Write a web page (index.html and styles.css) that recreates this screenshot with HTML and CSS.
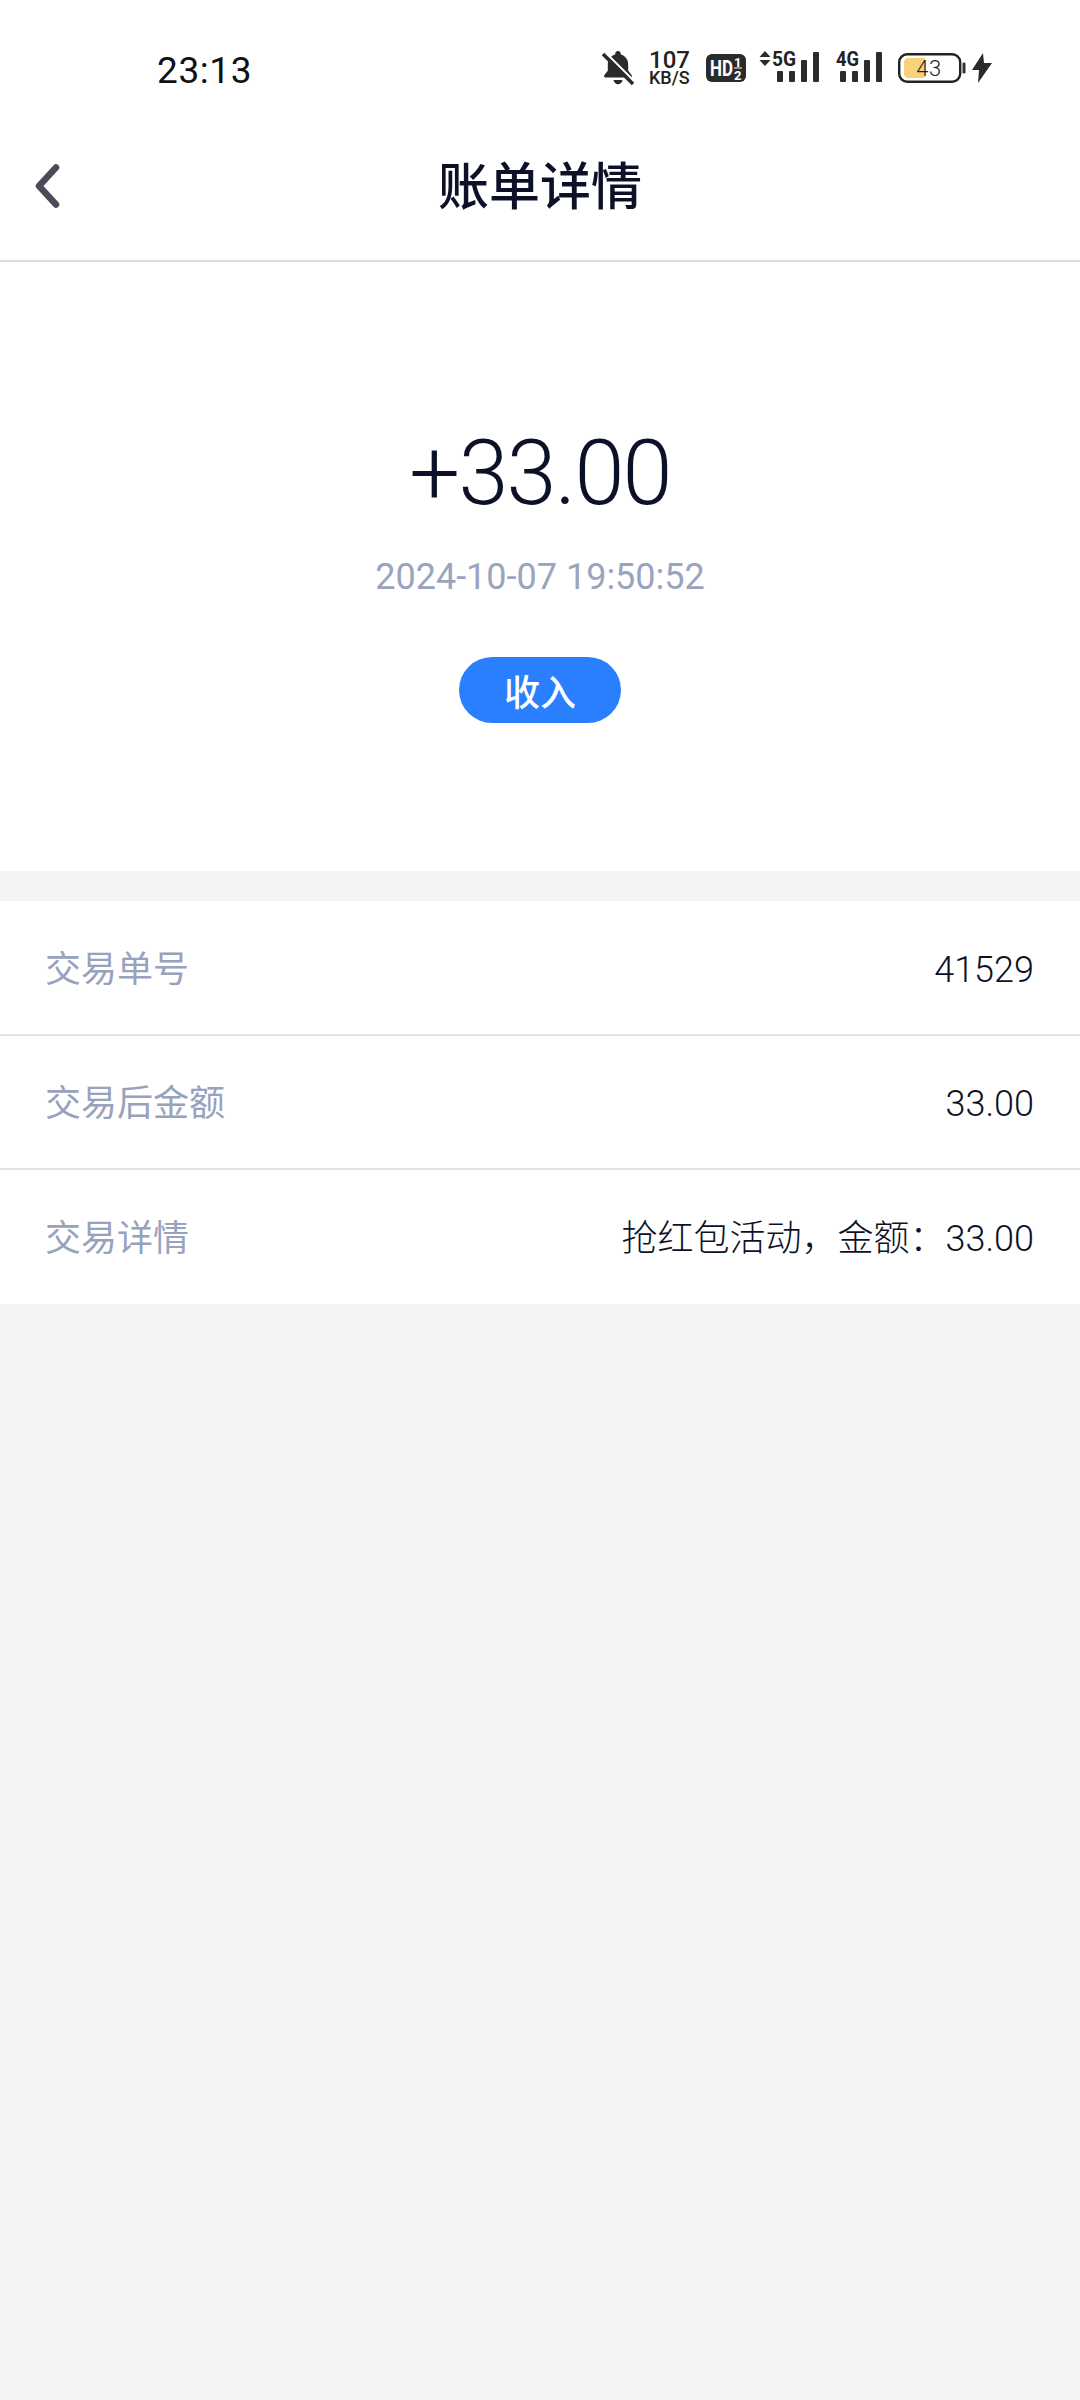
FILE: index.html
```html
<!DOCTYPE html>
<html lang="zh-CN">
<head>
<meta charset="utf-8">
<title>账单详情</title>
<link rel="stylesheet" href="styles.css">
</head>
<body>
<div class="page">
  <div class="status">
    <span class="time">23:13</span>
    <div class="status-icons">
      <svg class="ic-bell" width="32" height="36" viewBox="0 0 32 36">
        <path fill="#2b2b2b" d="M16 1c1.600 0 2.800 1.200 2.800 2.800v.7c4.600 1.300 7.400 5.200 7.400 10v6.200l3.400 4.300c.8 1.100.1 2.600-1.200 2.600H3.600c-1.300 0-2-1.500-1.200-2.600l3.400-4.300v-6.200c0-4.800 2.800-8.700 7.400-10v-.7C13.200 2.200 14.400 1 16 1z"/>
        <path fill="#2b2b2b" d="M11.500 30h9c-.4 2.600-2.200 4.300-4.500 4.300s-4.100-1.700-4.500-4.300z"/>
        <path stroke="#fff" stroke-width="2" d="M3 2l30 30"/>
        <path stroke="#2b2b2b" stroke-width="3.500" d="M1 4l30 30"/>
      </svg>
      <div class="speed"><span class="speed-num">107</span><span class="speed-unit">KB/S</span></div>
      <svg class="ic-hd" width="40" height="28" viewBox="0 0 40 28">
        <rect width="40" height="28" rx="6" fill="#2b2b2b"/>
        <text x="4" y="22" class="hd-t" textLength="23" lengthAdjust="spacingAndGlyphs">HD</text>
        <text x="28" y="12.500" class="hd-s">1</text>
        <rect x="28" y="13.500" width="8" height="1" fill="#fff"/>
        <text x="28" y="25.500" class="hd-s">2</text>
      </svg>
      <svg class="ic-sig5" width="62" height="44" viewBox="0 -4 62 44">
        <path fill="#2b2b2b" d="M7 1l5.500 6H1.500zM7 16l5.500-6H1.500z"/>
        <text x="14" y="16" class="net" textLength="24" lengthAdjust="spacingAndGlyphs">5G</text>
        <rect x="19" y="21" width="6" height="11" rx="1" fill="#2b2b2b"/>
        <rect x="31" y="21" width="6" height="11" rx="1" fill="#2b2b2b"/>
        <rect x="43" y="10" width="6" height="22" rx="1" fill="#2b2b2b"/>
        <rect x="55" y="2" width="6" height="30" rx="1" fill="#2b2b2b"/>
      </svg>
      <svg class="ic-sig4" width="47" height="44" viewBox="0 -4 47 44">
        <text x="0" y="16" class="net" textLength="23" lengthAdjust="spacingAndGlyphs">4G</text>
        <rect x="4" y="21" width="6" height="11" rx="1" fill="#2b2b2b"/>
        <rect x="16" y="21" width="6" height="11" rx="1" fill="#2b2b2b"/>
        <rect x="28" y="10" width="6" height="22" rx="1" fill="#2b2b2b"/>
        <rect x="40" y="2" width="6" height="30" rx="1" fill="#2b2b2b"/>
      </svg>
      <svg class="ic-batt" width="68" height="30" viewBox="0 0 68 30">
        <rect x="1.200" y="1.200" width="61" height="27.500" rx="8" fill="#fff" stroke="#222" stroke-width="2.400"/>
        <path fill="#f8d27a" d="M10 5h17v20H10c-2 0-4-2-4-4V9c0-2 2-4 4-4z"/>
        <text x="31" y="23" class="batt-t">43</text>
        <rect x="64.500" y="9.500" width="3" height="11" rx="1.200" fill="#333"/>
      </svg>
      <svg class="ic-bolt" width="20" height="30" viewBox="0 0 20 30">
        <path fill="#2b2b2b" d="M11 0L0 17h7L6 30l14-20h-8z"/>
      </svg>
    </div>
  </div>

  <header class="nav">
    <svg class="back" width="26" height="44" viewBox="0 0 26 44">
      <path fill="none" stroke="#4a4b58" stroke-width="6.500" stroke-linecap="round" stroke-linejoin="round" d="M22 3.500L5 22l17 18.500"/>
    </svg>
    <h1 class="title">账单详情</h1>
  </header>

  <section class="hero">
    <div class="amount">+33.00</div>
    <div class="date">2024-10-07 19:50:52</div>
    <div class="pill">收入</div>
  </section>

  <section class="list">
    <div class="row"><span class="label">交易单号</span><span class="value">41529</span></div>
    <div class="row"><span class="label">交易后金额</span><span class="value">33.00</span></div>
    <div class="row"><span class="label">交易详情</span><span class="value">抢红包活动，金额：33.00</span></div>
  </section>
</div>
</body>
</html>
```

FILE: styles.css
```css
* { box-sizing: border-box; }
html, body { margin: 0; padding: 0; }
body {
  background: #f2f3f5;
  font-family: Roboto, "Noto Sans CJK SC", sans-serif;
  color: #0d1128;
}
.page { width: 1080px; min-height: 2400px; display: flex; flex-direction: column; }

.status {
  height: 112px;
  padding: 28px 88px 0 157px;
  background: #fff;
  display: flex;
  align-items: center;
  justify-content: space-between;
}
.time { font-size: 37px; font-weight: 400; color: #111; letter-spacing: 0.6px; }
.status-icons { display: flex; align-items: center; position: relative; top: -2px; }
.status-icons svg { display: block; flex: none; }
.ic-bell { margin-right: 15px; }
.speed { display: flex; flex-direction: column; width: 42px; margin-right: 15px; color: #222; font-weight: 500; }
.speed-num { font-size: 24px; line-height: 20px; }
.speed-unit { font-size: 18px; line-height: 16px; }
.ic-hd { margin-right: 12px; }
.hd-t { font-size: 22px; font-weight: 700; fill: #fff; }
.hd-s { font-size: 13px; font-weight: 700; fill: #fff; }
.ic-sig5 { margin-right: 16px; }
.ic-sig4 { margin-right: 15px; }
.net { font-size: 20px; font-weight: 700; fill: #222; }
.ic-batt { margin-right: 6px; }
.batt-t { font-size: 22px; font-weight: 300; fill: #222; letter-spacing: 0.5px; text-anchor: middle; }

.nav {
  position: relative;
  height: 150px;
  background: #fff;
  border-bottom: 2px solid #d9dde3;
  display: flex;
  align-items: center;
  justify-content: center;
}
.back { position: absolute; left: 34px; top: 52px; }
.title { margin: 0; font-size: 51px; line-height: 70px; font-weight: 500; color: #0d1128; position: relative; top: 2px; }

.hero {
  height: 609px;
  padding-top: 157px;
  background: #fff;
  display: flex;
  flex-direction: column;
  align-items: center;
}
.amount { font-size: 90px; line-height: 110px; font-weight: 300; color: #0d1128; letter-spacing: -1.800px; }
.date { margin-top: 23px; font-size: 36px; line-height: 50px; color: #9aa4bf; font-weight: 400; }
.pill {
  margin-top: 55px;
  width: 162px;
  height: 66px;
  border-radius: 33px;
  background: #2a7fff;
  color: #fff;
  font-size: 36px;
  font-weight: 500;
  display: flex;
  align-items: center;
  justify-content: center;
}

.list { margin-top: 30px; background: #fff; }
.row {
  height: 134px;
  padding: 4px 46px 0 45px;
  display: flex;
  align-items: center;
  justify-content: space-between;
  border-bottom: 2px solid #e2e3e6;
  font-size: 36px;
  line-height: 50px;
}
.row:first-child { height: 135px; }
.row:last-child { border-bottom: 0; }
.label { color: #98a2bd; }
.value { color: #0d1128; font-weight: 300; }
```
